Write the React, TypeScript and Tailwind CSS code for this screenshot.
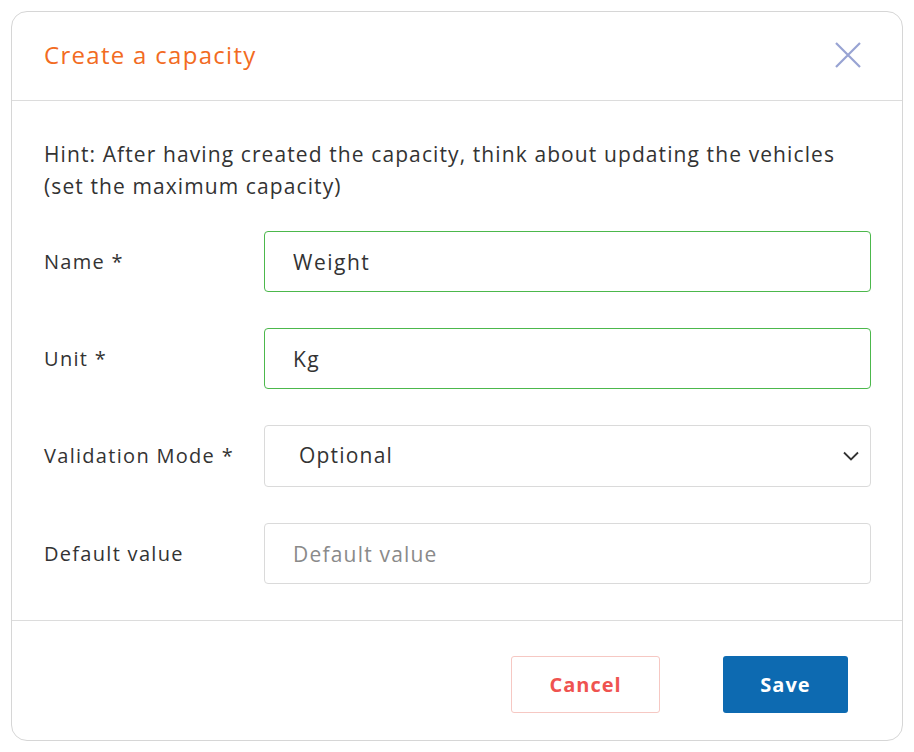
const font = { fontFamily: '"Open Sans", "Liberation Sans", sans-serif' };

function Field({
  label,
  children,
}: {
  label: string;
  children: React.ReactNode;
}) {
  return (
    <div className="flex items-center">
      <label className="w-[220px] shrink-0 text-[20px] tracking-[1.3px] text-[#333333]">{label}</label>
      <div className="flex-1">{children}</div>
    </div>
  );
}

export default function App() {
  return (
    <div className="h-[752px] w-[914px] bg-white p-[11px]" style={font}>
      <div className="flex h-full flex-col rounded-[16px] border border-[#d6d6d6] bg-white">
        <div className="flex h-[89px] items-center justify-between border-b border-[#dcdcdc] pb-[3px] pl-[32px] pr-[40px]">
          <h2 className="text-[24px] font-normal tracking-[1.3px] text-[#f26b22]">Create a capacity</h2>
          <button className="flex h-[28px] w-[28px] items-center justify-center">
            <svg width="28" height="28" viewBox="0 0 28 28" fill="none" stroke="#98a3d3" strokeWidth="2.2">
              <path d="M2 2 L26 26 M26 2 L2 26" />
            </svg>
          </button>
        </div>

        <div className="flex flex-col pl-[32px] pr-[31px] pt-[37px] pb-[36px]">
          <p className="text-[21px] leading-[32px] tracking-[1.1px] text-[#333333]">
            Hint: After having created the capacity, think about updating the vehicles (set the maximum capacity)
          </p>

          <div className="mt-[29px] flex flex-col gap-[36px]">
            <Field label="Name *">
              <input
                defaultValue="Weight"
                className="h-[61px] w-full rounded-[4px] border border-[#4cb84c] px-[28px] text-[21px] tracking-[1.5px] text-[#333333] outline-none"
                style={font}
              />
            </Field>
            <Field label="Unit *">
              <input
                defaultValue="Kg"
                className="h-[61px] w-full rounded-[4px] border border-[#4cb84c] px-[28px] text-[21px] tracking-[1.5px] text-[#333333] outline-none"
                style={font}
              />
            </Field>
            <Field label="Validation Mode *">
              <div className="flex h-[62px] w-full items-center justify-between rounded-[4px] border border-[#dadada] pl-[34px] pr-[10px] text-[21px] tracking-[1.2px] text-[#333333]">
                <span>Optional</span>
                <svg width="18" height="18" viewBox="0 0 18 18" fill="none" stroke="#333333" strokeWidth="1.8">
                  <path d="M2 5.5 L9 12.5 L16 5.5" />
                </svg>
              </div>
            </Field>
            <Field label="Default value">
              <input
                placeholder="Default value"
                className="h-[61px] w-full rounded-[4px] border border-[#dadada] px-[28px] text-[21px] tracking-[1.2px] text-[#333333] outline-none placeholder:text-[#8a8a8a]"
                style={font}
              />
            </Field>
          </div>
        </div>

        <div className="flex justify-end gap-[63px] border-t border-[#dcdcdc] pr-[54px] pt-[35px]">
          <button className="h-[57px] w-[149px] rounded-[3px] border border-[#f6c8c3] text-[20px] font-bold tracking-[1px] text-[#ef5350]">
            Cancel
          </button>
          <button className="h-[57px] w-[125px] rounded-[3px] bg-[#0d6ab1] text-[20px] font-bold tracking-[1px] text-white">
            Save
          </button>
        </div>
      </div>
    </div>
  );
}
